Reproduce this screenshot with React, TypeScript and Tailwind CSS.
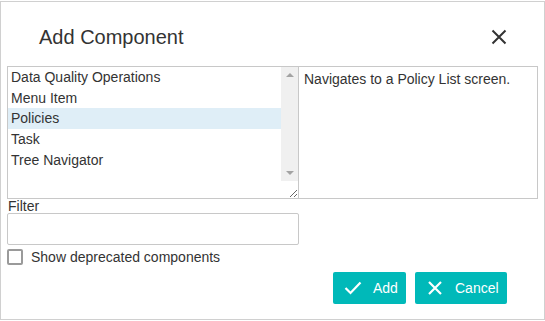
import React from "react";

const items = ["Data Quality Operations", "Menu Item", "Policies", "Task", "Tree Navigator"];

export default function App() {
  return (
    <div className="w-[545px] h-[321px] bg-white pt-px text-[#333] font-['Liberation_Sans',Arial,sans-serif]">
      <div className="h-[319px] border border-[#d0d0d0] flex flex-col">
        <div className="h-[64px] flex items-center justify-between pl-[38px] pr-[37px] pt-[6px]">
          <div className="text-[20px] leading-none">Add Component</div>
          <svg width="16" height="16" viewBox="0 0 16 16" className="mt-[-1px]">
            <path d="M1.5 1.5 L14.5 14.5 M14.5 1.5 L1.5 14.5" stroke="#333" strokeWidth="2" />
          </svg>
        </div>
        <div className="px-[6px] flex flex-col">
          <div className="flex h-[133px]">
            <div className="w-[292px] h-full border border-[#c8c8c8] flex">
              <div className="flex-1 flex flex-col">
                {items.map((it) => (
                  <div
                    key={it}
                    className={
                      "h-[20.7px] pl-[3px] text-[14px] leading-[20.7px] " +
                      (it === "Policies" ? "bg-[#dfeef7]" : "")
                    }
                  >
                    {it}
                  </div>
                ))}
              </div>
              <div className="w-[17px] h-full flex flex-col">
                <div className="flex-1 bg-[#f0f0f0] flex flex-col items-center justify-between py-[5px]">
                  <svg width="8" height="5" viewBox="0 0 8 5">
                    <path d="M0 5 L4 1 L8 5 Z" fill="#a3a3a3" />
                  </svg>
                  <svg width="8" height="5" viewBox="0 0 8 5">
                    <path d="M0 0 L8 0 L4 4 Z" fill="#a3a3a3" />
                  </svg>
                </div>
                <div className="h-[17px] bg-white flex items-end justify-end">
                  <svg width="12" height="12" viewBox="0 0 12 12">
                    <path d="M11 4 L4 11 M11 8 L8 11" stroke="#666" strokeWidth="1" />
                  </svg>
                </div>
              </div>
            </div>
            <div className="flex-1 h-full border border-l-0 border-[#c8c8c8] pl-[5px] pt-[3px] text-[14px] leading-[18px]">
              Navigates to a Policy List screen.
            </div>
          </div>
          <div className="text-[14px] leading-[16px] pl-px mt-[-1px]">Filter</div>
          <div className="w-[292px] h-[32px] border border-[#c8c8c8] rounded-[2px] mt-[-1px]" />
          <div className="flex items-center mt-[3px] h-[17px]">
            <div className="w-[16px] h-[16px] border-2 border-[#9a9a9a] rounded-[2px]" />
            <span className="ml-[8px] text-[14px] leading-[16px]">Show deprecated components</span>
          </div>
          <div className="flex justify-end gap-[9px] pr-[31px] mt-[7px]">
            <div className="w-[73px] h-[32px] bg-[#00b9b9] rounded-[2px] flex items-center text-white text-[14px]">
              <svg width="18" height="14" viewBox="0 0 18 14" className="ml-[11px]">
                <path d="M1.5 7 L6.5 12 L16.5 1.5" stroke="white" strokeWidth="2.2" fill="none" />
              </svg>
              <span className="ml-[11px]">Add</span>
            </div>
            <div className="w-[92px] h-[32px] bg-[#00b9b9] rounded-[2px] flex items-center text-white text-[14px]">
              <svg width="14" height="14" viewBox="0 0 14 14" className="ml-[13px]">
                <path d="M1 1 L13 13 M13 1 L1 13" stroke="white" strokeWidth="2.2" />
              </svg>
              <span className="ml-[13px]">Cancel</span>
            </div>
          </div>
        </div>
      </div>
    </div>
  );
}
